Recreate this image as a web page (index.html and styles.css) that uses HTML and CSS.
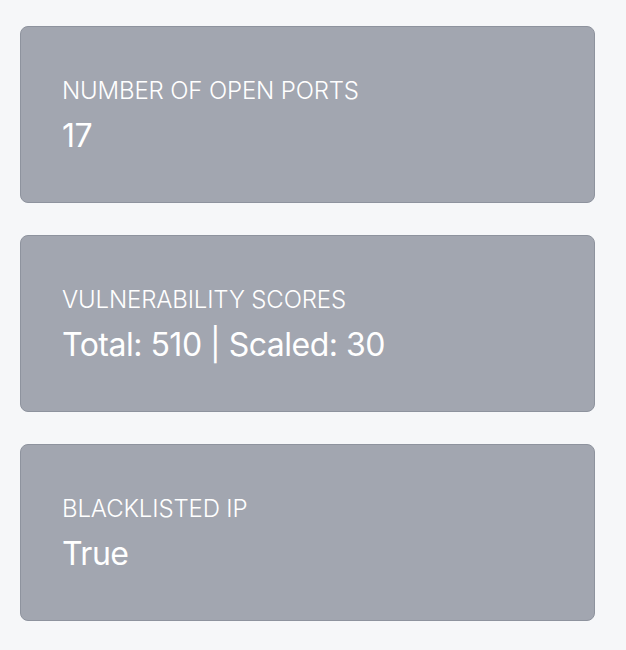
FILE: index.html
```html
<!DOCTYPE html>
<html lang="en">
<head>
    <meta charset="UTF-8">
    <meta name="viewport" content="width=device-width, initial-scale=1.0">
    <title>Host Summary</title>
    <link rel="stylesheet" href="styles.css">
</head>
<body>
    <div class="stats">
        <div class="stat-card">
            <div class="stat-label">NUMBER OF OPEN PORTS</div>
            <div class="stat-value">17</div>
        </div>
        <div class="stat-card">
            <div class="stat-label">VULNERABILITY SCORES</div>
            <div class="stat-value">Total: 510 | Scaled: 30</div>
        </div>
        <div class="stat-card">
            <div class="stat-label">BLACKLISTED IP</div>
            <div class="stat-value">True</div>
        </div>
    </div>
</body>
</html>
```

FILE: styles.css
```css
body {
    font-family: Inter, "Noto Sans", sans-serif;
    background-color: #f6f7f9;
    margin: 0;
    padding: 26px 31px 0 20px;
}
.stats {
    display: flex;
    flex-direction: column;
    gap: 32px;
}
.stat-card {
    background: #a2a6b0;
    border: 1px solid #8e939e;
    border-radius: 8px;
    padding: 48px 40px 46px 41px;
    color: #fff;
}
.stat-label {
    font-size: 24px;
    font-weight: 300;
    line-height: 32px;
    letter-spacing: -0.15px;
}
.stat-value {
    font-size: 32px;
    font-weight: 400;
    line-height: 40px;
    letter-spacing: -0.5px;
    margin-top: 9px;
}
```
